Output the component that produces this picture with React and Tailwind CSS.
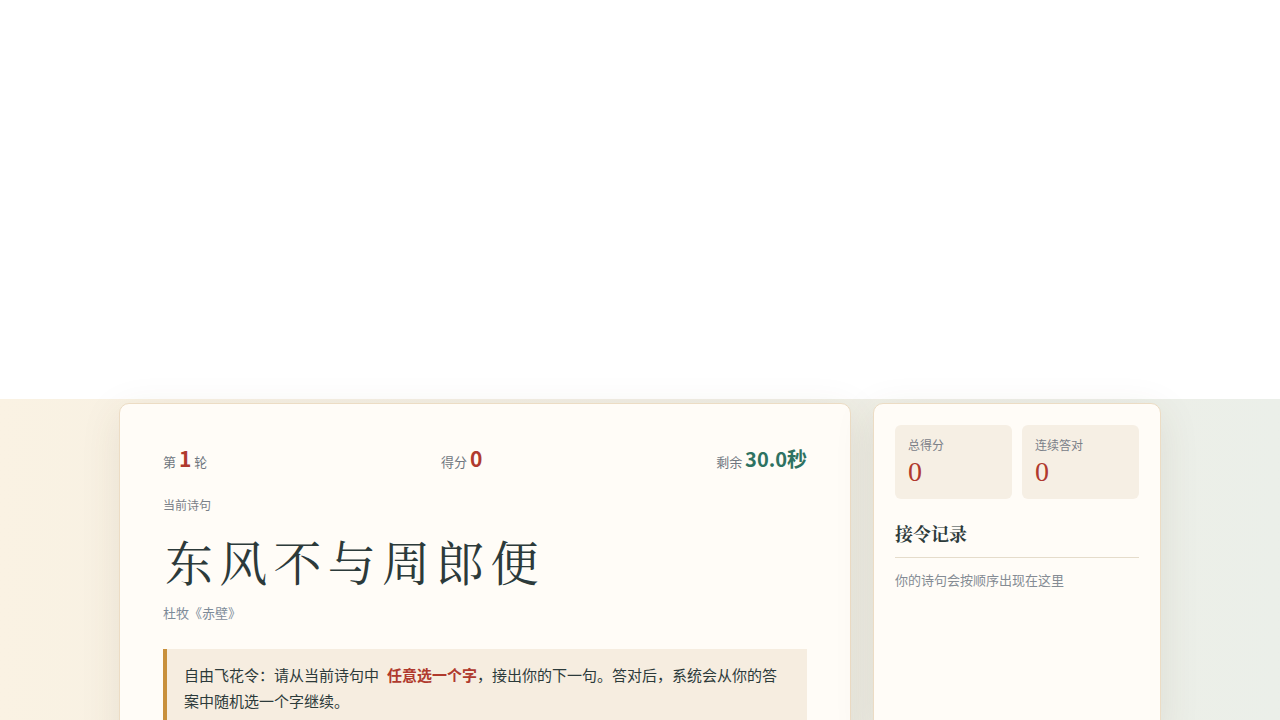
export default function App() {
  const sans = { fontFamily: '"Noto Sans CJK SC", "Noto Sans", sans-serif' };
  return (
    <div className="min-h-[720px] bg-white" style={sans}>
      <div className="h-[399px] bg-white"></div>
      <div className="bg-gradient-to-r from-[#faf2e3] via-[#f1eee4] to-[#ebefe9] pt-1 pb-10 min-h-[321px]">
        <div className="mx-auto w-[1042px] flex gap-[22px] items-start">
          <div className="w-[732px] bg-[#fffcf7] border border-[#ecdcc4] rounded-[10px] shadow-[0_10px_40px_rgba(90,70,40,0.10)] px-[43px] pt-[39px] pb-10">
            <div className="flex justify-between items-baseline">
              <div className="text-[13px] text-[#6f7780]">
                第 <span className="text-[21px] font-bold text-[#b03a2e]">1</span> 轮
              </div>
              <div className="text-[13px] text-[#6f7780]">
                得分 <span className="text-[21px] font-bold text-[#b03a2e]">0</span>
              </div>
              <div className="text-[13px] text-[#6f7780]">
                剩余 <span className="text-[20px] font-bold text-[#2e7262]">30.0秒</span>
              </div>
            </div>
            <div className="mt-[21px] text-[12px] text-[#7a8088] leading-[18px]">当前诗句</div>
            <div
              className="mt-[15px] text-[48px] leading-[64px] tracking-[0.13em] text-[#2c3a3a] pl-[2px]"
              style={{ fontFamily: '"Noto Serif CJK SC", "Noto Serif SC", "Liberation Serif", serif' }}
            >
              东风不与周郎便
            </div>
            <div className="mt-[10px] text-[13px] text-[#7d8b99] leading-[20px]">杜牧《赤壁》</div>
            <div className="mt-[26px] border-l-4 border-[#c8903c] bg-[#f6ede0] pl-[17px] pr-4 py-[13px] text-[15px] leading-[26px] text-[#2c3a3a]">
              自由飞花令：请从当前诗句中<span className="ml-[8px] font-bold text-[#b03a2e]">任意选一个字</span>，接出你的下一句。答对后，系统会从你的答案中随机选一个字继续。
            </div>
          </div>
          <div className="w-[288px] min-h-[330px] bg-[#fffcf7] border border-[#ecdcc4] rounded-[10px] shadow-[0_10px_40px_rgba(90,70,40,0.10)] px-[21px] pt-[21px] pb-6">
            <div className="grid grid-cols-2 gap-[10px]">
              <div className="bg-[#f6efe4] rounded-[6px] h-[74px] px-[13px] pt-[12px]">
                <div className="text-[12px] text-[#7a8088] leading-[16px]">总得分</div>
                <div className="mt-[2px] text-[28px] leading-[34px] text-[#b03a2e]" style={{ fontFamily: '"Liberation Serif", serif' }}>0</div>
              </div>
              <div className="bg-[#f6efe4] rounded-[6px] h-[74px] px-[13px] pt-[12px]">
                <div className="text-[12px] text-[#7a8088] leading-[16px]">连续答对</div>
                <div className="mt-[2px] text-[28px] leading-[34px] text-[#b03a2e]" style={{ fontFamily: '"Liberation Serif", serif' }}>0</div>
              </div>
            </div>
            <div
              className="mt-[21px] text-[18px] font-bold text-[#2c3a3a] leading-[26px] pb-[11px] border-b border-[#e5dccb]"
              style={{ fontFamily: '"Noto Serif CJK SC", "Noto Serif SC", "Liberation Serif", serif' }}
            >
              接令记录
            </div>
            <div className="mt-[12px] text-[13px] text-[#858c94] leading-[20px]">你的诗句会按顺序出现在这里</div>
          </div>
        </div>
      </div>
    </div>
  );
}
